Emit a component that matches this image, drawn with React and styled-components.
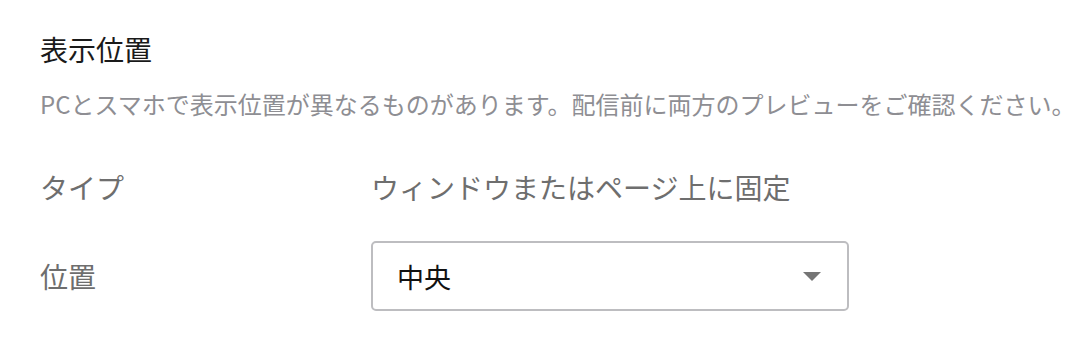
import { Fragment } from 'react';
import styled, { createGlobalStyle } from 'styled-components';

const GlobalStyle = createGlobalStyle`
  body {
    margin: 0;
    background: #ffffff;
    font-family: "Noto Sans CJK JP", "Noto Sans", sans-serif;
  }
`;

const Section = styled.section`
  padding: 29px 40px 0;
`;

const Title = styled.h2`
  margin: 0;
  font-size: 28px;
  font-weight: 400;
  line-height: 40px;
  color: #1a1a1a;
`;

const Note = styled.p`
  margin: 17px 0 0;
  font-size: 24px;
  line-height: 36px;
  color: #8e8e93;
  white-space: nowrap;
`;

const Fields = styled.div`
  display: grid;
  grid-template-columns: 331px 478px;
  align-items: center;
  row-gap: 36px;
  margin-top: 47px;
`;

const Label = styled.div`
  font-size: 28px;
  line-height: 36px;
  color: #6e6e6e;
`;

const Value = styled.div`
  font-size: 28px;
  line-height: 36px;
  color: #6e6e6e;
  white-space: nowrap;
`;

const Select = styled.div`
  box-sizing: border-box;
  height: 70px;
  display: flex;
  align-items: center;
  justify-content: space-between;
  padding: 0 26px 0 24px;
  border: 2px solid #bdbdc0;
  border-radius: 5px;
  font-size: 27px;
  color: #111;
  cursor: pointer;
`;

const Caret = styled.span`
  width: 0;
  height: 0;
  border-left: 9px solid transparent;
  border-right: 9px solid transparent;
  border-top: 9px solid #757575;
`;

const fields = [
  { label: 'タイプ', value: 'ウィンドウまたはページ上に固定' },
  { label: '位置', select: '中央' },
];

export default function App() {
  return (
    <>
      <GlobalStyle />
      <Section>
        <Title>表示位置</Title>
        <Note>PCとスマホで表示位置が異なるものがあります。配信前に両方のプレビューをご確認ください。</Note>
        <Fields>
          {fields.map((f) => (
            <Fragment key={f.label}>
              <Label>{f.label}</Label>
              {f.select ? (
                <Select role="button">
                  <span>{f.select}</span>
                  <Caret />
                </Select>
              ) : (
                <Value>{f.value}</Value>
              )}
            </Fragment>
          ))}
        </Fields>
      </Section>
    </>
  );
}
